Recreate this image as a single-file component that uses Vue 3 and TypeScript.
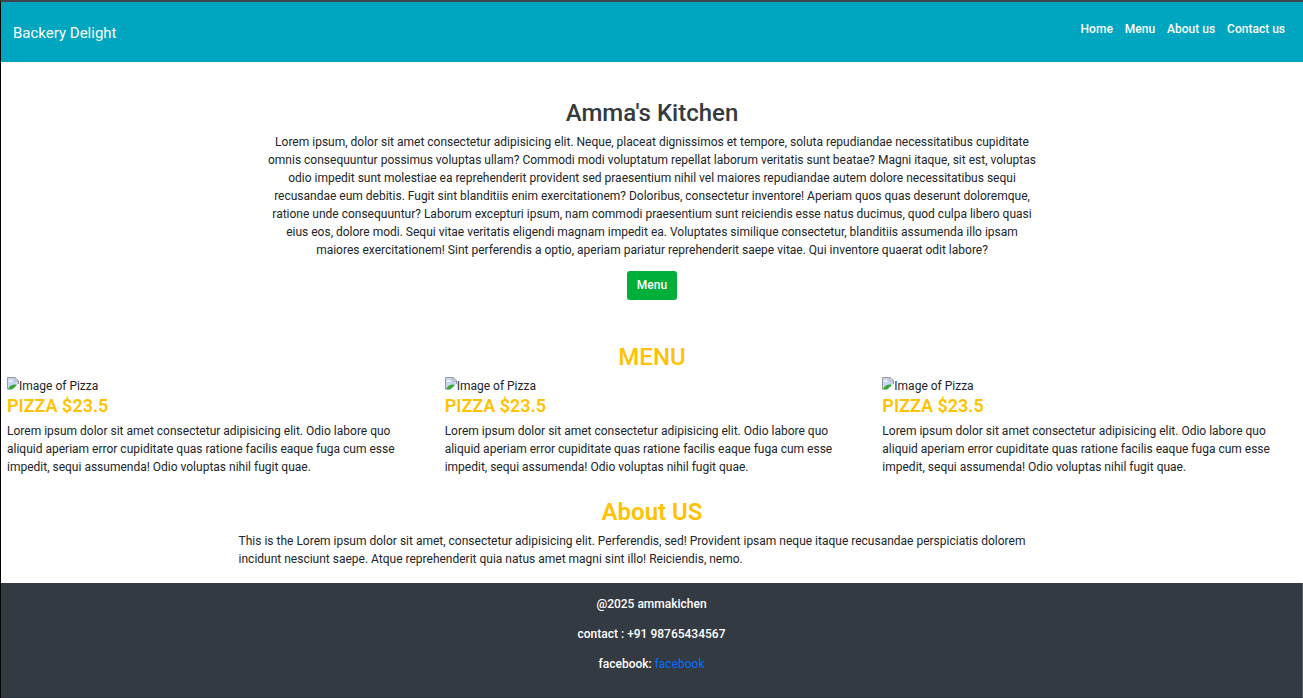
<script setup lang="ts">
interface NavLink {
  label: string
  href: string
}

interface Dish {
  id: number
  title: string
  alt: string
  lines: string[]
}

const links: NavLink[] = [
  { label: 'Home', href: '#home' },
  { label: 'Menu', href: '#menu' },
  { label: 'About us', href: '#about' },
  { label: 'Contact us', href: '#contact' },
]

const intro: string[] = [
  'Lorem ipsum, dolor sit amet consectetur adipisicing elit. Neque, placeat dignissimos et tempore, soluta repudiandae necessitatibus cupiditate',
  'omnis consequuntur possimus voluptas ullam? Commodi modi voluptatum repellat laborum veritatis sunt beatae? Magni itaque, sit est, voluptas',
  'odio impedit sunt molestiae ea reprehenderit provident sed praesentium nihil vel maiores repudiandae autem dolore necessitatibus sequi',
  'recusandae eum debitis. Fugit sint blanditiis enim exercitationem? Doloribus, consectetur inventore! Aperiam quos quas deserunt doloremque,',
  'ratione unde consequuntur? Laborum excepturi ipsum, nam commodi praesentium sunt reiciendis esse natus ducimus, quod culpa libero quasi',
  'eius eos, dolore modi. Sequi vitae veritatis eligendi magnam impedit ea. Voluptates similique consectetur, blanditiis assumenda illo ipsam',
  'maiores exercitationem! Sint perferendis a optio, aperiam pariatur reprehenderit saepe vitae. Qui inventore quaerat odit labore?',
]

const dishes: Dish[] = [1, 2, 3].map((id) => ({
  id,
  title: 'PIZZA $23.5',
  alt: 'Image of Pizza',
  lines: [
    'Lorem ipsum dolor sit amet consectetur adipisicing elit. Odio labore quo',
    'aliquid aperiam error cupiditate quas ratione facilis eaque fuga cum esse',
    'impedit, sequi assumenda! Odio voluptas nihil fugit quae.',
  ],
}))

const about: string[] = [
  'This is the Lorem ipsum dolor sit amet, consectetur adipisicing elit. Perferendis, sed! Provident ipsam neque itaque recusandae perspiciatis dolorem',
  'incidunt nesciunt saepe. Atque reprehenderit quia natus amet magni sint illo! Reiciendis, nemo.',
]
</script>

<template>
  <div class="page">
    <header class="navbar">
      <a class="brand" href="#home">Backery Delight</a>
      <nav>
        <ul class="links">
          <li v-for="link in links" :key="link.label">
            <a :href="link.href">{{ link.label }}</a>
          </li>
        </ul>
      </nav>
    </header>

    <main>
      <section id="home" class="hero">
        <h1>Amma's Kitchen</h1>
        <p><span v-for="line in intro" :key="line" class="line">{{ line }}</span></p>
        <button type="button" class="btn">Menu</button>
      </section>

      <section id="menu" class="menu">
        <h2>MENU</h2>
        <div class="dishes">
          <article v-for="dish in dishes" :key="dish.id">
            <div class="photo">
              <svg class="broken" viewBox="0 0 12 13" aria-hidden="true">
                <path d="M.5 12.500V.5h7.700l3.300 3.300V8L6 12.500z" fill="#c6d6f3" />
                <path d="M1.500 4.800c0-1 .8-1.400 1.500-1.200.6-.8 2-.4 2 .4.600 0 .8.400.8.8z" fill="#fff" />
                <path d="M1 12.500c1-3 3.500-5.500 7.500-5L10 9l-4.500 3.500z" fill="#35a835" />
                <path d="M.5 12.500V.5h7.700l3.300 3.300V7" fill="none" stroke="#9a9a9a" />
                <path d="M8 .5V4h3.500z" fill="#fff" stroke="#9a9a9a" stroke-width=".8" />
                <path d="M12 7.500 5.500 13" stroke="#fff" stroke-width="1.400" />
              </svg>
              <span>{{ dish.alt }}</span>
            </div>
            <h3>{{ dish.title }}</h3>
            <p><span v-for="line in dish.lines" :key="line" class="line">{{ line }}</span></p>
          </article>
        </div>
      </section>

      <section id="about" class="about">
        <h2>About US</h2>
        <p><span v-for="line in about" :key="line" class="line">{{ line }}</span></p>
      </section>
    </main>

    <footer id="contact" class="footer">
      <p>@2025 ammakichen</p>
      <p>contact : +91 98765434567</p>
      <p>facebook: <a href="#facebook">facebook</a></p>
    </footer>
  </div>
</template>

<style>
body {
  margin: 0;
  background: #fff;
}
</style>

<style scoped>
.page {
  box-sizing: border-box;
  min-height: 100vh;
  display: flex;
  flex-direction: column;
  border-top: 2px solid #40464a;
  border-left: 1px solid #000;
  color: #212529;
  font-family: Roboto, "Liberation Sans", sans-serif;
  font-size: 12px;
  line-height: 18px;
}

h1,
h2,
h3,
p,
ul {
  margin: 0;
  padding: 0;
}

a {
  text-decoration: none;
}

.navbar {
  display: flex;
  justify-content: space-between;
  align-items: flex-start;
  height: 60px;
  padding: 0 18px 0 12px;
  box-sizing: border-box;
  background: #00a5bf;
}

.brand {
  margin-top: 20px;
  color: #fff;
  font-size: 15px;
  line-height: 22px;
}

.links {
  display: flex;
  gap: 12px;
  margin-top: 18px;
  list-style: none;
}

.links a {
  color: #fff;
  font-weight: 500;
}

.line {
  display: block;
  white-space: nowrap;
}

h1,
h2 {
  font-size: 24px;
  line-height: 28px;
  font-weight: 500;
  text-align: center;
}

h2,
h3 {
  color: #ffc200;
}

.hero {
  display: flex;
  flex-direction: column;
  align-items: center;
  padding-top: 37px;
  text-align: center;
}

.hero h1 {
  margin-bottom: 6px;
  color: #343a40;
}

.btn {
  margin-top: 12px;
  padding: 0 10px 2px;
  height: 29px;
  border: 0;
  border-radius: 3px;
  background: #00ae3a;
  color: #fff;
  font: inherit;
  font-weight: 500;
}

.menu {
  padding: 43px 6px 0;
}

.menu h2 {
  margin-bottom: 6px;
}

.dishes {
  display: grid;
  grid-template-columns: repeat(3, minmax(0, 1fr));
  gap: 23px;
}

.photo {
  display: flex;
  height: 18px;
}

.broken {
  width: 12px;
  height: 13px;
}

h3 {
  margin-bottom: 5px;
  font-size: 18px;
  line-height: 22px;
  font-weight: 600;
}

.about {
  padding-top: 22px;
}

.about h2 {
  font-weight: 600;
}

.about p {
  width: fit-content;
  margin: 6px auto 15px;
  padding-right: 40px;
}

.footer {
  flex: 1;
  padding-top: 12px;
  border-right: 1px solid #596063;
  border-bottom: 1px solid #2b333d;
  background: #343a42;
  color: #fff;
  font-weight: 500;
  text-align: center;
}

.footer p {
  margin-bottom: 12px;
}

.footer a {
  color: #006fff;
  font-weight: 400;
}
</style>
